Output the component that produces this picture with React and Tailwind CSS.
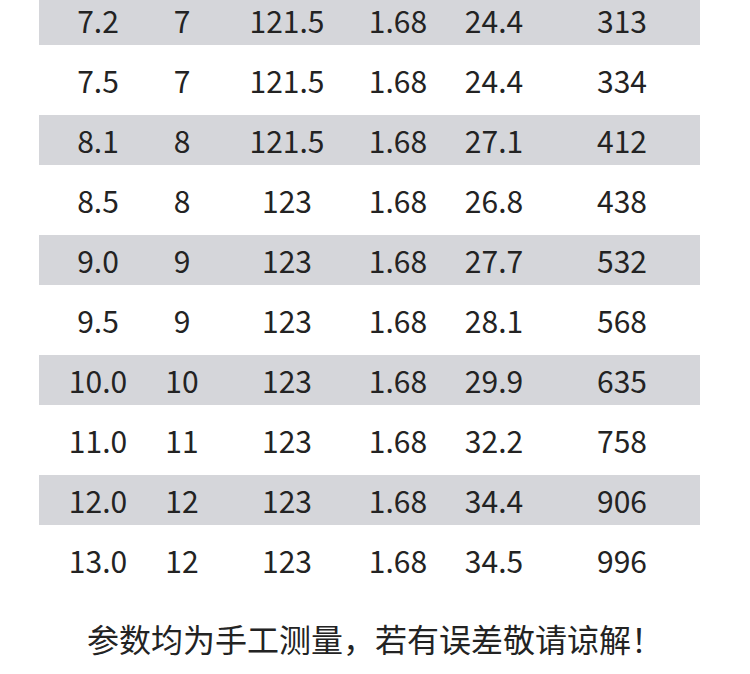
const rows = [
  ['7.2', '7', '121.5', '1.68', '24.4', '313'],
  ['7.5', '7', '121.5', '1.68', '24.4', '334'],
  ['8.1', '8', '121.5', '1.68', '27.1', '412'],
  ['8.5', '8', '123', '1.68', '26.8', '438'],
  ['9.0', '9', '123', '1.68', '27.7', '532'],
  ['9.5', '9', '123', '1.68', '28.1', '568'],
  ['10.0', '10', '123', '1.68', '29.9', '635'],
  ['11.0', '11', '123', '1.68', '32.2', '758'],
  ['12.0', '12', '123', '1.68', '34.4', '906'],
  ['13.0', '12', '123', '1.68', '34.5', '996'],
];

const font = { fontFamily: '"Noto Sans CJK SC", "Noto Sans", sans-serif' };

export default function App() {
  return (
    <div
      className="w-[750px] h-[674px] overflow-hidden bg-white text-[#232323]"
      style={font}
    >
      <div className="mt-[-5px] ml-[39px] w-[661px]">
        {rows.map((r, i) => (
          <div
            key={i}
            className={
              i % 2 === 0
                ? 'grid grid-cols-[118px_50px_160px_62px_130px_126px] items-center h-[50px] bg-[#d5d6da]'
                : 'grid grid-cols-[118px_50px_160px_62px_130px_126px] items-center h-[70px] bg-white'
            }
          >
            {r.map((c, j) => (
              <div key={j} className="text-center text-[30px] leading-none">
                {c}
              </div>
            ))}
          </div>
        ))}
      </div>
      <p className="mt-[19px] text-center text-[32px] leading-[48px]">
        参数均为手工测量，若有误差敬请谅解！
      </p>
    </div>
  );
}
